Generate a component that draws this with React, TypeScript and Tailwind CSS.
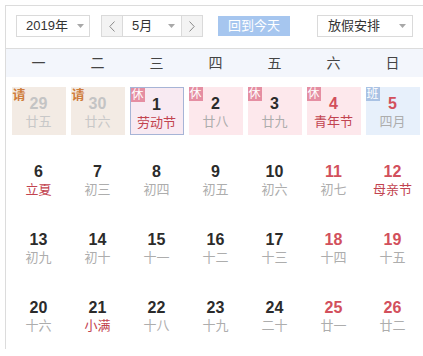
type Day = {
  n: number;
  sub: string;
  red?: boolean;
  fest?: boolean;
  dim?: boolean;
  tag?: "请" | "休" | "班";
  today?: boolean;
};

const weeks: Day[][] = [
  [
    { n: 29, sub: "廿五", dim: true, tag: "请" },
    { n: 30, sub: "廿六", dim: true, tag: "请" },
    { n: 1, sub: "劳动节", fest: true, tag: "休", today: true },
    { n: 2, sub: "廿八", tag: "休" },
    { n: 3, sub: "廿九", tag: "休" },
    { n: 4, sub: "青年节", red: true, fest: true, tag: "休" },
    { n: 5, sub: "四月", red: true, tag: "班" },
  ],
  [
    { n: 6, sub: "立夏", fest: true },
    { n: 7, sub: "初三" },
    { n: 8, sub: "初四" },
    { n: 9, sub: "初五" },
    { n: 10, sub: "初六" },
    { n: 11, sub: "初七", red: true },
    { n: 12, sub: "母亲节", red: true, fest: true },
  ],
  [
    { n: 13, sub: "初九" },
    { n: 14, sub: "初十" },
    { n: 15, sub: "十一" },
    { n: 16, sub: "十二" },
    { n: 17, sub: "十三" },
    { n: 18, sub: "十四", red: true },
    { n: 19, sub: "十五", red: true },
  ],
  [
    { n: 20, sub: "十六" },
    { n: 21, sub: "小满", fest: true },
    { n: 22, sub: "十八" },
    { n: 23, sub: "十九" },
    { n: 24, sub: "二十" },
    { n: 25, sub: "廿一", red: true },
    { n: 26, sub: "廿二", red: true },
  ],
];

const Caret = () => (
  <svg width="7" height="4" viewBox="0 0 7 4" className="shrink-0">
    <path d="M0 0h7L3.5 4z" fill="#a8a8a8" />
  </svg>
);

const Chevron = ({ left }: { left?: boolean }) => (
  <svg width="6" height="11" viewBox="0 0 6 11">
    <path
      d={left ? "M5.5 0.5L0.8 5.5l4.7 5" : "M0.5 0.5l4.7 5-4.7 5"}
      fill="none"
      stroke="#8a8a8a"
      strokeWidth="1"
    />
  </svg>
);

const Cell = ({ d }: { d: Day }) => {
  let bg = "";
  if (d.tag === "请") bg = "bg-[#f3ebe4]";
  if (d.tag === "休") bg = "bg-[#fde8ec]";
  if (d.tag === "班") bg = "bg-[#e7f0fb]";
  if (d.today) bg = "bg-[#f8eaf2] border border-[#a6b4d6]";

  const num = d.dim ? "text-[#c4c4c4]" : d.red ? "text-[#d2505c]" : "text-[#2b2b2b]";
  const sub = d.dim ? "text-[#c8c8c8]" : d.fest ? "text-[#c2434f]" : "text-[#adadad]";

  return (
    <div className={`relative mx-auto mt-[10px] w-[54px] h-[48px] ${bg}`}>
      {d.tag === "请" && (
        <span className="absolute left-[1px] top-[1px] text-[13px] leading-[14px] font-bold text-[#cf7d3c]">请</span>
      )}
      {d.tag === "休" && (
        <span className="absolute left-0 top-0 w-[14px] h-[14px] bg-[#e58ea2] text-white text-[12px] leading-[14px] text-center">休</span>
      )}
      {d.tag === "班" && (
        <span className="absolute left-0 top-0 w-[14px] h-[14px] bg-[#a9c2e4] text-white text-[12px] leading-[14px] text-center">班</span>
      )}
      <div className={`pt-[7px] text-center text-[16px] leading-[20px] font-bold ${num}`}>{d.n}</div>
      <div className={`text-center text-[13px] leading-[16px] ${sub}`}>{d.sub}</div>
    </div>
  );
};

export default function App() {
  return (
    <div className="w-[423px] h-[356px] bg-white overflow-hidden font-['Liberation_Sans','Noto_Sans_CJK_SC',sans-serif]">
      <div className="ml-[5px] mt-[5px] border-l border-t border-[#dcdcdc]">
        <div className="flex items-start h-[43px] pt-[9px] pl-[10px] border-b border-[#dcdcdc] text-[13px] text-[#333]">
          <div className="flex items-center justify-between w-[74px] h-[22px] pl-[9px] pr-[5px] border border-[#dadada] bg-white">
            <span>2019年</span>
            <Caret />
          </div>
          <div className="flex ml-[11px] h-[22px]">
            <div className="flex items-center justify-center w-[22px] border border-[#dadada] bg-[#f3f3f3]">
              <Chevron left />
            </div>
            <div className="flex items-center justify-between w-[58px] pl-[9px] pr-[6px] border-y border-[#dadada] bg-white">
              <span>5月</span>
              <Caret />
            </div>
            <div className="flex items-center justify-center w-[22px] border border-[#dadada] bg-[#f3f3f3]">
              <Chevron />
            </div>
          </div>
          <div className="ml-[15px] mt-[1px] w-[72px] h-[20px] bg-[#a6c6ef] text-white text-center leading-[20px]">
            回到今天
          </div>
          <div className="flex items-center justify-between ml-[27px] w-[96px] h-[22px] pl-[10px] pr-[6px] border border-[#dadada] bg-white">
            <span>放假安排</span>
            <Caret />
          </div>
        </div>
        <div className="grid grid-cols-[repeat(7,59px)] pl-[3px] h-[28px] bg-[#f3f6fc] text-[14px] text-[#444] items-center">
          {["一", "二", "三", "四", "五", "六", "日"].map((w) => (
            <div key={w} className="text-center">{w}</div>
          ))}
        </div>
        {weeks.map((week, i) => (
          <div key={i} className="grid grid-cols-[repeat(7,59px)] pl-[3px] h-[68px]">
            {week.map((d) => (
              <Cell key={d.n} d={d} />
            ))}
          </div>
        ))}
      </div>
    </div>
  );
}
